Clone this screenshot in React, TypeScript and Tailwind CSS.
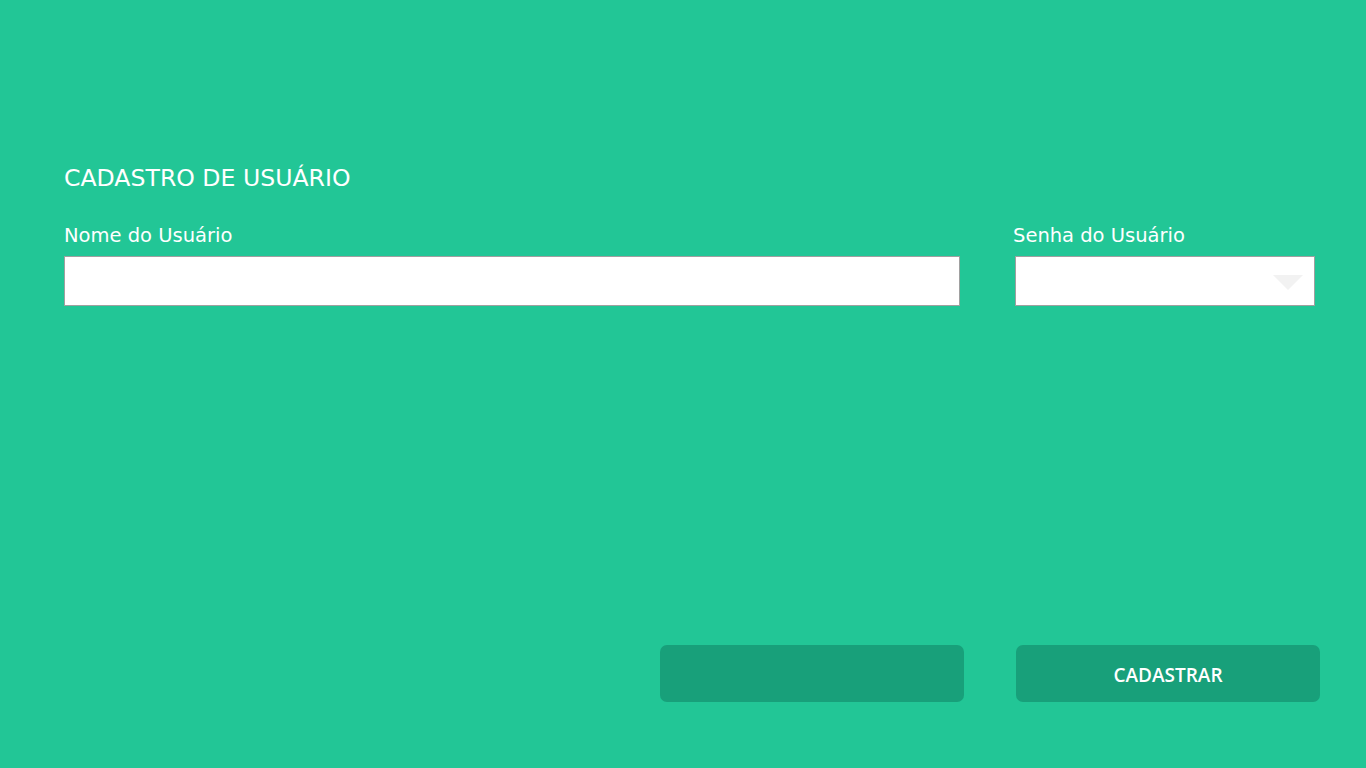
export default function App() {
  return (
    <div className="w-[1366px] h-[768px] bg-[#22c696] flex flex-col font-['DejaVu_Sans',sans-serif] text-white">
      <div className="pt-[162px] pl-16">
        <h1 className="text-[23.6px] leading-[32px] font-normal">CADASTRO DE USUÁRIO</h1>
      </div>
      <div className="flex pl-16 pt-[28px] gap-[55px]">
        <div className="w-[896px] flex flex-col">
          <label className="text-[19.5px] leading-[28px]">Nome do Usuário</label>
          <input className="mt-[6px] h-[50px] w-full bg-white border border-[#a0a0a0] outline-none" />
        </div>
        <div className="w-[300px] flex flex-col">
          <label className="text-[19.5px] leading-[28px] -ml-[2px]">Senha do Usuário</label>
          <div className="mt-[6px] h-[50px] w-full bg-white border border-[#a0a0a0] flex items-center justify-end pr-[11px]">
            <svg width="30" height="15" viewBox="0 0 30 15" className="mt-[2px]">
              <polygon points="0,0 30,0 15,15" fill="#f2f2f2" />
            </svg>
          </div>
        </div>
      </div>
      <div className="flex-1" />
      <div className="flex justify-end gap-[52px] pr-[46px] pb-[66px]">
        <button className="w-[304px] h-[57px] rounded-[7px] bg-[#18a07a]" />
        <button className="w-[304px] h-[57px] rounded-[7px] bg-[#18a07a] pt-[4px] text-[19px] font-semibold font-['Open_Sans',sans-serif] text-white">
          CADASTRAR
        </button>
      </div>
    </div>
  );
}
